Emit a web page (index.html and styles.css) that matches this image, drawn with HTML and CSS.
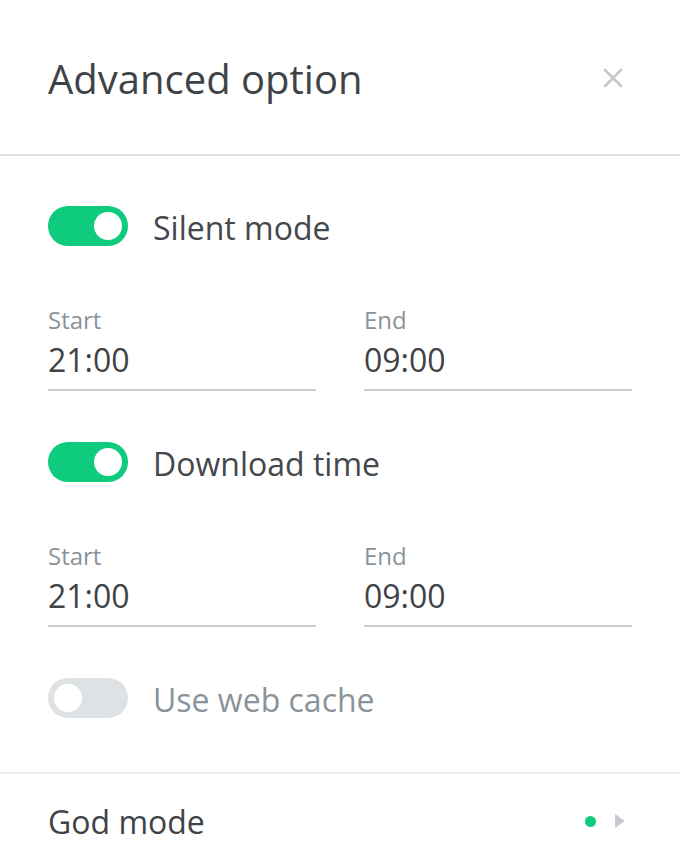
FILE: index.html
```html
<!DOCTYPE html>
<html lang="en">
<head>
    <meta charset="UTF-8">
    <meta name="viewport" content="width=device-width, initial-scale=1.0">
    <title>Advanced option</title>
    <link rel="stylesheet" href="styles.css">
</head>
<body>
    <div class="panel">
        <!-- Header -->
        <div class="panel-header">
            <h1 class="panel-title">Advanced option</h1>
            <button class="close-btn" aria-label="Close">
                <svg width="22" height="22" viewBox="0 0 22 22">
                    <path d="M3 3 L19 19 M19 3 L3 19" stroke="#c3c8cd" stroke-width="2.6" stroke-linecap="round"/>
                </svg>
            </button>
        </div>

        <div class="panel-body">
            <!-- Silent mode -->
            <label class="switch-row">
                <span class="switch on"><span class="knob"></span></span>
                <span class="switch-label">Silent mode</span>
            </label>
            <div class="time-range">
                <div class="time-field">
                    <div class="time-caption">Start</div>
                    <div class="time-value">21:00</div>
                </div>
                <div class="time-field">
                    <div class="time-caption">End</div>
                    <div class="time-value">09:00</div>
                </div>
            </div>

            <!-- Download time -->
            <label class="switch-row">
                <span class="switch on"><span class="knob"></span></span>
                <span class="switch-label">Download time</span>
            </label>
            <div class="time-range">
                <div class="time-field">
                    <div class="time-caption">Start</div>
                    <div class="time-value">21:00</div>
                </div>
                <div class="time-field">
                    <div class="time-caption">End</div>
                    <div class="time-value">09:00</div>
                </div>
            </div>

            <!-- Web cache -->
            <label class="switch-row disabled">
                <span class="switch"><span class="knob"></span></span>
                <span class="switch-label">Use web cache</span>
            </label>
        </div>

        <!-- Footer link -->
        <div class="panel-link">
            <span class="link-label">God mode</span>
            <span class="status-dot"></span>
            <span class="chevron"></span>
        </div>
    </div>
</body>
</html>
```

FILE: styles.css
```css
* {
    margin: 0;
    padding: 0;
    box-sizing: border-box;
}

body {
    font-family: 'Open Sans', sans-serif;
    background: #fff;
    color: #44484c;
    width: 680px;
    height: 868px;
    overflow: hidden;
}

/* Header */
.panel-header {
    display: flex;
    align-items: center;
    justify-content: space-between;
    height: 156px;
    padding: 0 56px 0 48px;
    border-bottom: 2px solid #dcdfe2;
}

.panel-title {
    font-size: 40px;
    font-weight: 400;
    color: #3f4347;
    margin-top: 2px;
}

.close-btn {
    background: none;
    border: none;
    display: flex;
    cursor: pointer;
    margin-top: 2px;
}

/* Body */
.panel-body {
    padding: 50px 48px 54px;
}

.switch-row {
    display: flex;
    align-items: center;
    gap: 25px;
    height: 40px;
    cursor: pointer;
}

.switch {
    width: 80px;
    height: 40px;
    border-radius: 20px;
    background: #dfe2e5;
    display: flex;
    align-items: center;
    padding: 0 6px;
}

.switch.on {
    background: #0fcb7e;
    justify-content: flex-end;
}

.knob {
    width: 28px;
    height: 28px;
    border-radius: 50%;
    background: #fff;
}

.switch-label {
    font-size: 32px;
    color: #44484c;
    margin-top: 3px;
}

.disabled .switch-label {
    color: #8a9399;
}

.time-range {
    display: grid;
    grid-template-columns: 1fr 1fr;
    gap: 48px;
    margin: 58px 0 51px;
}

.time-field {
    border-bottom: 2px solid #c9ced3;
    padding-bottom: 5px;
}

.time-caption {
    font-size: 24px;
    color: #8a9399;
    line-height: 32px;
}

.time-value {
    font-size: 32px;
    color: #3f4347;
    line-height: 48px;
}

/* Footer link */
.panel-link {
    display: flex;
    align-items: center;
    height: 96px;
    padding: 0 55px 0 48px;
    border-top: 2px solid #eceef0;
}

.link-label {
    font-size: 32px;
    color: #3f4347;
    flex: 1;
}

.status-dot {
    width: 11px;
    height: 11px;
    border-radius: 50%;
    background: #0fcb7e;
    margin-right: 19px;
}

.chevron {
    width: 0;
    height: 0;
    border-top: 7px solid transparent;
    border-bottom: 7px solid transparent;
    border-left: 10px solid #c5cad0;
}
```
